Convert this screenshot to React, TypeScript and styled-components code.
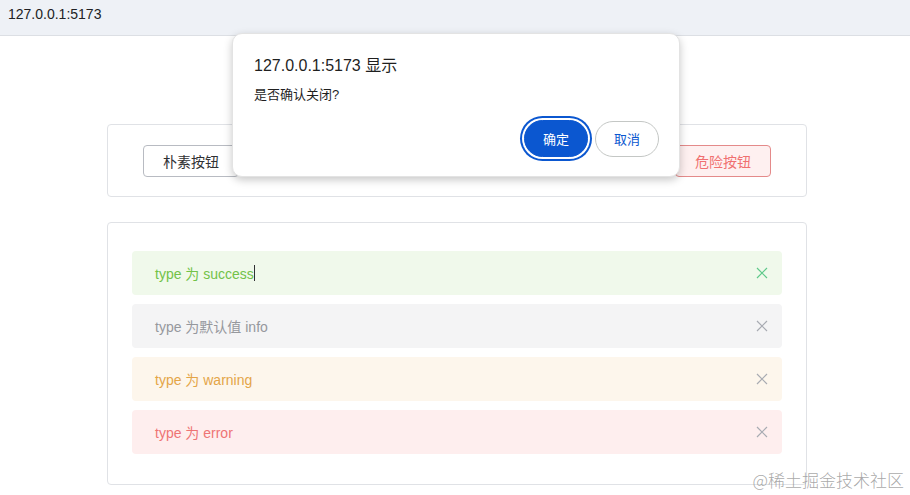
import React from 'react'
import styled, {createGlobalStyle} from 'styled-components'

const GlobalStyle = createGlobalStyle`
  html, body {
    margin: 0;
    padding: 0;
    background: #fff;
    font-family: 'Liberation Sans', 'Noto Sans CJK SC', sans-serif;
  }
`

const Screen = styled.div`
  position: relative;
  width: 910px;
  height: 495px;
  overflow: hidden;
  background: #fff;
`

const AddressBar = styled.div`
  height: 36px;
  box-sizing: border-box;
  padding: 0 8px 8px;
  display: flex;
  align-items: center;
  background: #eef1f6;
  border-bottom: 1px solid #dcdfe4;
  font-size: 14px;
  color: #202124;
`

const Page = styled.div`
  display: flex;
  flex-direction: column;
  gap: 25px;
  padding: 88px 0 0 107px;
`

const Card = styled.div`
  width: 700px;
  box-sizing: border-box;
  border: 1px solid #e0e2e6;
  border-radius: 4px;
  background: #fff;
`

const ButtonRow = styled(Card)`
  height: 73px;
  display: flex;
  align-items: center;
  justify-content: space-between;
  padding: 0 35px;
`

const variants = {
  plain: {bg: '#fff', border: '#b8bbc2', color: '#303133'},
  primary: {bg: '#ecf5ff', border: '#a0cfff', color: '#409eff'},
  success: {bg: '#f0f9eb', border: '#b3e19d', color: '#67c23a'},
  info: {bg: '#f4f4f5', border: '#c8c9cc', color: '#909399'},
  warning: {bg: '#fdf6ec', border: '#f3d19e', color: '#e6a23c'},
  danger: {bg: '#fef0f0', border: '#e48a8a', color: '#f07070'},
}

type Kind = keyof typeof variants

const Button = styled.button<{$kind: Kind}>`
  height: 32px;
  padding: 0 19px;
  border-radius: 4px;
  border: 1px solid ${(p) => variants[p.$kind].border};
  background: ${(p) => variants[p.$kind].bg};
  color: ${(p) => variants[p.$kind].color};
  font-family: inherit;
  font-size: 14px;
`

const AlertList = styled(Card)`
  height: 263px;
  display: flex;
  flex-direction: column;
  gap: 9px;
  padding: 28px 24px 0 24px;
`

const alertColors = {
  success: {bg: '#f0f9eb', color: '#72c248', close: '#5fc98a'},
  info: {bg: '#f4f4f5', color: '#96989d', close: '#a8abb2'},
  warning: {bg: '#fdf6ec', color: '#e4a548', close: '#a8abb2'},
  error: {bg: '#feeeee', color: '#ee7474', close: '#a8abb2'},
}

type AlertType = keyof typeof alertColors

const Alert = styled.div<{$type: AlertType}>`
  height: 44px;
  display: flex;
  align-items: center;
  justify-content: space-between;
  padding: 0 14px 0 23px;
  border-radius: 4px;
  background: ${(p) => alertColors[p.$type].bg};
  color: ${(p) => alertColors[p.$type].color};
  font-size: 14px;
`

const AlertText = styled.span`
  display: flex;
  align-items: center;
`

const Caret = styled.span`
  display: inline-block;
  width: 1px;
  height: 16px;
  background: #303133;
`

const CloseIcon = styled.svg<{$type: AlertType}>`
  width: 12px;
  height: 12px;
  stroke: ${(p) => alertColors[p.$type].close};
  stroke-width: 1.2;
`

const Dialog = styled.div`
  position: absolute;
  left: 232px;
  top: 33px;
  width: 448px;
  height: 144px;
  box-sizing: border-box;
  padding: 22px 20px 0 21px;
  background: #fff;
  border-radius: 10px;
  border: 1px solid #e3e3e3;
  box-shadow: 0 3px 8px rgba(0, 0, 0, 0.22);
  display: flex;
  flex-direction: column;
`

const DialogTitle = styled.div`
  font-size: 16px;
  color: #1f1f1f;
  line-height: 20px;
`

const DialogMessage = styled.div`
  margin-top: 11px;
  font-size: 13px;
  color: #1f1f1f;
  line-height: 16px;
`

const DialogActions = styled.div`
  margin-top: 17px;
  display: flex;
  justify-content: flex-end;
  align-items: center;
  gap: 7px;
`

const DialogButton = styled.button<{$primary?: boolean}>`
  height: ${(p) => (p.$primary ? '37px' : '36px')};
  padding: 0 ${(p) => (p.$primary ? '18px' : '18px')};
  border-radius: 20px;
  font-family: inherit;
  font-size: 13px;
  border: 1px solid ${(p) => (p.$primary ? '#0b57d0' : '#c4c7c5')};
  background: ${(p) => (p.$primary ? '#0b57d0' : '#fff')};
  color: ${(p) => (p.$primary ? '#fff' : '#0b57d0')};
  box-shadow: ${(p) =>
    p.$primary ? '0 0 0 2px #fff, 0 0 0 4px #0b57d0' : 'none'};
`

const Watermark = styled.div`
  position: absolute;
  right: 6px;
  bottom: 3px;
  font-family: 'Noto Sans CJK SC', sans-serif;
  font-size: 17px;
  font-weight: 300;
  color: rgba(130, 130, 130, 0.7);
`

const buttons: {kind: Kind; label: string}[] = [
  {kind: 'plain', label: '朴素按钮'},
  {kind: 'primary', label: '主要按钮'},
  {kind: 'success', label: '成功按钮'},
  {kind: 'info', label: '信息按钮'},
  {kind: 'warning', label: '警告按钮'},
  {kind: 'danger', label: '危险按钮'},
]

const alerts: {type: AlertType; label: string}[] = [
  {type: 'success', label: 'type 为 success'},
  {type: 'info', label: 'type 为默认值 info'},
  {type: 'warning', label: 'type 为 warning'},
  {type: 'error', label: 'type 为 error'},
]

export default function App() {
  return (
    <Screen>
      <GlobalStyle />
      <AddressBar>127.0.0.1:5173</AddressBar>
      <Page>
        <ButtonRow>
          {buttons.map((b) => (
            <Button key={b.label} $kind={b.kind}>
              {b.label}
            </Button>
          ))}
        </ButtonRow>
        <AlertList>
          {alerts.map((a) => (
            <Alert key={a.type} $type={a.type}>
              <AlertText>
                {a.label}
                {a.type === 'success' && <Caret />}
              </AlertText>
              <CloseIcon $type={a.type} viewBox="0 0 12 12" fill="none">
                <path d="M1 1L11 11M11 1L1 11" />
              </CloseIcon>
            </Alert>
          ))}
        </AlertList>
      </Page>
      <Dialog>
        <DialogTitle>127.0.0.1:5173 显示</DialogTitle>
        <DialogMessage>是否确认关闭?</DialogMessage>
        <DialogActions>
          <DialogButton $primary>确定</DialogButton>
          <DialogButton>取消</DialogButton>
        </DialogActions>
      </Dialog>
      <Watermark>@稀土掘金技术社区</Watermark>
    </Screen>
  )
}
